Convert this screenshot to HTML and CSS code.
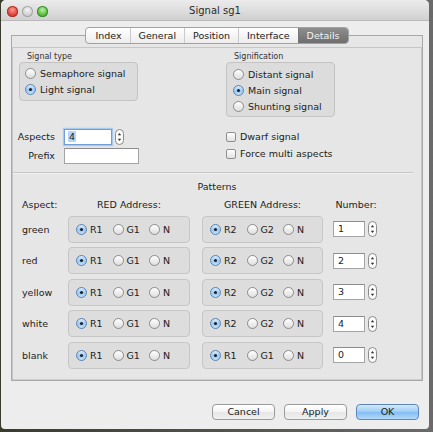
FILE: index.html
```html
<!DOCTYPE html>
<html>
<head>
<meta charset="utf-8">
<link rel="stylesheet" href="styles.css">
</head>
<body>
<div class="window">
  <div class="titlebar">
    <div class="lights"><span class="light red"></span><span class="light gray"></span><span class="light green"></span></div>
    <div class="title">Signal sg1</div>
    <div></div>
  </div>
  <div class="tabs">
    <div class="tabstrip">
      <span class="tab">Index</span><span class="tab">General</span><span class="tab">Position</span><span class="tab">Interface</span><span class="tab sel">Details</span>
    </div>
  </div>
  <div class="pane">
    <div class="inner">
      <div class="top">
        <div class="col">
          <div class="gtitle">Signal type</div>
          <div class="group g1">
            <div class="radio"><i></i>Semaphore signal</div>
            <div class="radio on"><i></i>Light signal</div>
          </div>
          <div class="form">
            <div class="flabel">Aspects</div>
            <div class="spin"><div class="field focus w48"><span class="hl">4</span></div><svg class="arrows" width="9" height="16" viewBox="0 0 9 16"><rect x="0.5" y="0.5" width="8" height="15" rx="4" fill="#fbfbfb" stroke="#8a8a8a"/><path d="M2.8 6.2 L4.5 4 L6.2 6.2 Z M2.8 9.8 L4.5 12 L6.2 9.8 Z" fill="#333"/></svg></div>
            <div class="flabel">Prefix</div>
            <div class="field w75"></div>
          </div>
        </div>
        <div class="col">
          <div class="gtitle">Signification</div>
          <div class="group g2">
            <div class="radio"><i></i>Distant signal</div>
            <div class="radio on"><i></i>Main signal</div>
            <div class="radio"><i></i>Shunting signal</div>
          </div>
          <div class="checks">
            <div class="check"><b></b>Dwarf signal</div>
            <div class="check"><b></b>Force multi aspects</div>
          </div>
        </div>
      </div>
      <div class="sep"></div>
      <div class="ptitle">Patterns</div>
      <div class="grid">
        <div class="hcell left">Aspect:</div>
        <div class="hcell">RED Address:</div>
        <div class="hcell">GREEN Address:</div>
        <div class="hcell num">Number:</div>

        <div class="rlabel">green</div>
        <div class="pbox"><div class="pr on"><i></i>R1</div><div class="pr"><i></i>G1</div><div class="pr"><i></i>N</div></div>
        <div class="pbox"><div class="pr on"><i></i>R2</div><div class="pr"><i></i>G2</div><div class="pr"><i></i>N</div></div>
        <div class="nspin"><div class="field w32">1</div><svg class="arrows" width="9" height="16" viewBox="0 0 9 16"><rect x="0.5" y="0.5" width="8" height="15" rx="4" fill="#fbfbfb" stroke="#8a8a8a"/><path d="M2.8 6.2 L4.5 4 L6.2 6.2 Z M2.8 9.8 L4.5 12 L6.2 9.8 Z" fill="#333"/></svg></div>

        <div class="rlabel">red</div>
        <div class="pbox"><div class="pr on"><i></i>R1</div><div class="pr"><i></i>G1</div><div class="pr"><i></i>N</div></div>
        <div class="pbox"><div class="pr on"><i></i>R2</div><div class="pr"><i></i>G2</div><div class="pr"><i></i>N</div></div>
        <div class="nspin"><div class="field w32">2</div><svg class="arrows" width="9" height="16" viewBox="0 0 9 16"><rect x="0.5" y="0.5" width="8" height="15" rx="4" fill="#fbfbfb" stroke="#8a8a8a"/><path d="M2.8 6.2 L4.5 4 L6.2 6.2 Z M2.8 9.8 L4.5 12 L6.2 9.8 Z" fill="#333"/></svg></div>

        <div class="rlabel">yellow</div>
        <div class="pbox"><div class="pr on"><i></i>R1</div><div class="pr"><i></i>G1</div><div class="pr"><i></i>N</div></div>
        <div class="pbox"><div class="pr on"><i></i>R2</div><div class="pr"><i></i>G2</div><div class="pr"><i></i>N</div></div>
        <div class="nspin"><div class="field w32">3</div><svg class="arrows" width="9" height="16" viewBox="0 0 9 16"><rect x="0.5" y="0.5" width="8" height="15" rx="4" fill="#fbfbfb" stroke="#8a8a8a"/><path d="M2.8 6.2 L4.5 4 L6.2 6.2 Z M2.8 9.8 L4.5 12 L6.2 9.8 Z" fill="#333"/></svg></div>

        <div class="rlabel">white</div>
        <div class="pbox"><div class="pr on"><i></i>R1</div><div class="pr"><i></i>G1</div><div class="pr"><i></i>N</div></div>
        <div class="pbox"><div class="pr on"><i></i>R2</div><div class="pr"><i></i>G2</div><div class="pr"><i></i>N</div></div>
        <div class="nspin"><div class="field w32">4</div><svg class="arrows" width="9" height="16" viewBox="0 0 9 16"><rect x="0.5" y="0.5" width="8" height="15" rx="4" fill="#fbfbfb" stroke="#8a8a8a"/><path d="M2.8 6.2 L4.5 4 L6.2 6.2 Z M2.8 9.8 L4.5 12 L6.2 9.8 Z" fill="#333"/></svg></div>

        <div class="rlabel">blank</div>
        <div class="pbox"><div class="pr on"><i></i>R1</div><div class="pr"><i></i>G1</div><div class="pr"><i></i>N</div></div>
        <div class="pbox"><div class="pr on"><i></i>R1</div><div class="pr"><i></i>G1</div><div class="pr"><i></i>N</div></div>
        <div class="nspin"><div class="field w32">0</div><svg class="arrows" width="9" height="16" viewBox="0 0 9 16"><rect x="0.5" y="0.5" width="8" height="15" rx="4" fill="#fbfbfb" stroke="#8a8a8a"/><path d="M2.8 6.2 L4.5 4 L6.2 6.2 Z M2.8 9.8 L4.5 12 L6.2 9.8 Z" fill="#333"/></svg></div>
      </div>
    </div>
  </div>
  <div class="buttons">
    <div class="btn">Cancel</div>
    <div class="btn">Apply</div>
    <div class="btn ok">OK</div>
  </div>
</div>
</body>
</html>
```
FILE: styles.css
```css
* { box-sizing: border-box; }
html, body { margin: 0; }
body {
  width: 433px;
  height: 432px;
  overflow: hidden;
  background: linear-gradient(90deg, #3a3a2e 0, #6a6a6a 100%);
  font-family: "DejaVu Sans", sans-serif;
  font-size: 9.5px;
  color: #1c1c1c;
}
.window {
  margin-left: 1px;
  width: 428px;
  height: 429px;
  background: #ededed;
  border-radius: 5px 5px 4px 4px;
  overflow: hidden;
  display: flex;
  flex-direction: column;
}
.titlebar {
  flex: none;
  height: 21px;
  display: grid;
  grid-template-columns: 1fr auto 1fr;
  align-items: center;
  background: linear-gradient(#ececec, #d0d0d0);
  border-bottom: 1px solid #b9b9b9;
}
.lights { display: flex; gap: 4px; padding-left: 6px; padding-top: 2px; }
.light { width: 11px; height: 11px; border-radius: 50%; display: block; }
.light.red { background: radial-gradient(circle at 50% 35%, #ff9a90 0, #e0473e 55%, #b92a22 100%); box-shadow: inset 0 0 0 1px #a8342c; }
.light.gray { background: radial-gradient(circle at 50% 35%, #f2f2f2 0, #cfcfcf 60%, #b3b3b3 100%); box-shadow: inset 0 0 0 1px #a5a5a5; }
.light.green { background: radial-gradient(circle at 50% 35%, #b9f0a0 0, #5bbf44 55%, #3a932c 100%); box-shadow: inset 0 0 0 1px #3f8a31; }
.title { font-size: 10px; color: #2b2b2b; padding-top: 1px; }

.tabs {
  position: relative;
  z-index: 1;
  margin: 6px 0 0 10px;
  width: 412px;
  display: flex;
  justify-content: center;
}
.tabstrip {
  display: flex;
  height: 17px;
  border: 1px solid #a2a2a2;
  border-radius: 4px;
  background: linear-gradient(#ffffff, #ececec);
  overflow: hidden;
}
.tab {
  padding: 0 8px;
  line-height: 15px;
  color: #222;
  border-left: 1px solid #c9c9c9;
}
.tab:first-child { border-left: none; padding-left: 9px; }
.tab.sel {
  background: linear-gradient(#8e8e8e, #6e6e6e);
  color: #f4f4f4;
  border-left-color: #777;
}
.pane {
  margin: -9px 0 0 10px;
  width: 412px;
  height: 346px;
  border: 1px solid #a9a9a9;
  background: #e6e6e6;
  padding-top: 11px;
  display: flex;
}
.inner {
  flex: 1;
  border: 1px solid #c6c6c6;
  border-bottom-color: #cdcdcd;
}
.top {
  display: grid;
  grid-template-columns: 213px 1fr;
  padding-top: 4px;
}
.gtitle {
  font-size: 8px;
  line-height: 10px;
  height: 10px;
  color: #333;
}
.col:first-child .gtitle { margin-left: 14px; }
.col:last-child .gtitle { margin-left: 8px; }
.group {
  border: 1px solid #c3c3c3;
  border-radius: 4px;
  background: #dcdcdc;
}
.g1 { margin-left: 6px; width: 119px; height: 39px; padding: 2px 0 0 5px; }
.g2 { width: 109px; height: 55px; padding: 3px 0 0 6px; }
.radio { display: flex; align-items: center; height: 16px; white-space: nowrap; }
.radio i, .pr i {
  flex: none;
  position: relative;
  width: 11px;
  height: 11px;
  border-radius: 50%;
  border: 1px solid #8c8c8c;
  background: linear-gradient(#ffffff, #dedede);
  margin-right: 4px;
}
.radio.on i, .pr.on i {
  border-color: #5a82b0;
  background: linear-gradient(#d8ebfd 0, #98c8f4 55%, #c3e0fb 100%);
}
.radio.on i::after, .pr.on i::after {
  content: "";
  position: absolute;
  left: 3px;
  top: 3px;
  width: 3px;
  height: 3px;
  border-radius: 50%;
  background: #1f1f1f;
}
.form {
  display: grid;
  grid-template-columns: 42px auto;
  column-gap: 9px;
  row-gap: 3px;
  margin-top: 28px;
  align-items: center;
}
.flabel { text-align: right; line-height: 16px; }
.spin, .nspin { display: flex; align-items: center; gap: 3px; }
.field {
  height: 16px;
  background: #fff;
  border: 1px solid #a4a4a4;
  border-top-color: #8c8c8c;
  line-height: 14px;
  padding-left: 3px;
}
.field.focus { border-color: #6f9fd6; box-shadow: 0 0 1px 1px #a9c9ee; }
.hl { background: #b4d5fd; padding: 0 1px; }
.w48 { width: 48px; }
.w75 { width: 75px; }
.w32 { width: 32px; padding-left: 4px; }
.arrows { display: block; flex: none; }
.checks { margin-top: 11px; }
.check { display: flex; align-items: center; height: 17px; }
.check b {
  width: 10px;
  height: 10px;
  border: 1px solid #8e8e8e;
  border-radius: 2px;
  background: linear-gradient(#ffffff, #e1e1e1);
  margin-right: 4px;
}
.sep {
  height: 1px;
  background: #c5c5c5;
  margin: 8px 8px 0 0;
  box-shadow: 0 1px 0 #f2f2f2;
}
.ptitle { text-align: center; line-height: 12px; margin-top: 8px; }
.grid {
  display: grid;
  grid-template-columns: 43px 122px 121px 44px;
  grid-template-rows: 12px repeat(5, 27px);
  column-gap: 12px;
  row-gap: 4.5px;
  margin-top: 6px;
  align-items: center;
}
.grid > .hcell { line-height: 12px; text-align: center; align-self: start; }
.grid > .hcell.left { text-align: left; padding-left: 9px; }
.grid > .hcell:nth-child(-n+4) { margin-bottom: 0.5px; }
.hcell.num { margin-left: -2px; }
.grid { row-gap: 4.5px; }
.rlabel { padding-left: 9px; }
.pbox {
  height: 27px;
  border: 1px solid #c6c6c6;
  border-radius: 4px;
  background: #dddddd;
  display: flex;
  align-items: center;
  padding-left: 7px;
}
.pr { width: 36.5px; display: flex; align-items: center; flex: none; }
.pr i { margin-right: 3px; }
.nspin { margin-left: -2px; }
.buttons {
  display: flex;
  justify-content: flex-end;
  gap: 9px;
  padding-right: 10px;
  margin-top: 23px;
}
.btn {
  width: 63px;
  height: 16px;
  line-height: 14px;
  text-align: center;
  border: 1px solid #9b9b9b;
  border-radius: 4px;
  background: linear-gradient(#ffffff, #f3f3f3 50%, #e6e6e6 51%, #f0f0f0);
  color: #1a1a1a;
}
.btn.ok {
  border-color: #5d87b8;
  background: linear-gradient(#d3e9fc, #9ccbf5 50%, #82bcf2 51%, #b3d9fb);
}
```
